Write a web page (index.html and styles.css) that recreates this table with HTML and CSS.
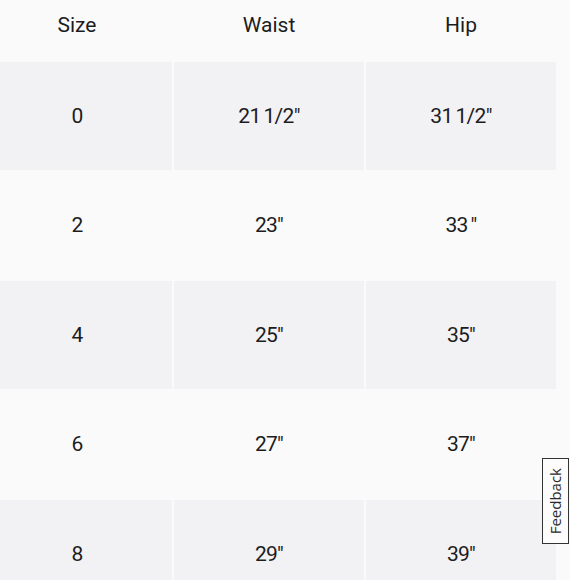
FILE: index.html
```html
<!DOCTYPE html>
<html>
<head>
<meta charset="utf-8">
<link rel="stylesheet" href="styles.css">
</head>
<body>
<div class="page">
  <div class="table">
    <div class="row head">
      <div class="cell">Size</div>
      <div class="cell">Waist</div>
      <div class="cell">Hip</div>
    </div>
    <div class="row shade">
      <div class="cell">0</div>
      <div class="cell">21 1/2"</div>
      <div class="cell">31 1/2"</div>
    </div>
    <div class="row">
      <div class="cell">2</div>
      <div class="cell">23"</div>
      <div class="cell">33 "</div>
    </div>
    <div class="row shade">
      <div class="cell">4</div>
      <div class="cell">25"</div>
      <div class="cell">35"</div>
    </div>
    <div class="row">
      <div class="cell">6</div>
      <div class="cell">27"</div>
      <div class="cell">37"</div>
    </div>
    <div class="row shade">
      <div class="cell">8</div>
      <div class="cell">29"</div>
      <div class="cell">39"</div>
    </div>
  </div>
  <div class="edge"></div>
  <div class="feedback"><span>Feedback</span></div>
</div>
</body>
</html>
```

FILE: styles.css
```css
html, body {
  margin: 0;
  padding: 0;
  background: #fafafa;
}
.page {
  width: 580px;
  height: 580px;
  overflow: hidden;
  display: flex;
  position: relative;
  background: #fafafa;
}
.table {
  margin-left: -18px;
  width: 588px;
  display: flex;
  flex-direction: column;
  gap: 1.5px;
  flex: none;
  font-family: Roboto, "Liberation Sans", sans-serif;
  font-size: 21px;
  color: #1c1c1e;
}
.row {
  display: grid;
  grid-template-columns: 190px 190px 190px;
  column-gap: 2px;
  height: 108px;
  flex: none;
  letter-spacing: -0.7px;
  word-spacing: -1.5px;
}
.row.head {
  height: 60px;
  letter-spacing: 0;
  word-spacing: 0;
}
.cell {
  display: flex;
  align-items: center;
  justify-content: center;
  box-sizing: border-box;
}
.row.head .cell {
  padding-bottom: 10px;
}
.row.shade .cell {
  background: #f2f2f4;
}
.edge {
  flex: 1;
  background: #ffffff;
}
.feedback {
  position: absolute;
  left: 542px;
  top: 458px;
  width: 27px;
  height: 86px;
  box-sizing: border-box;
  border: 1.5px solid #333;
  background: #fcfcfc;
  display: flex;
  align-items: center;
  justify-content: center;
}
.feedback span {
  writing-mode: vertical-rl;
  transform: rotate(180deg);
  font-family: "Open Sans", "DejaVu Sans", sans-serif;
  font-size: 15px;
  color: #2a2a2a;
  line-height: 1;
}
```
